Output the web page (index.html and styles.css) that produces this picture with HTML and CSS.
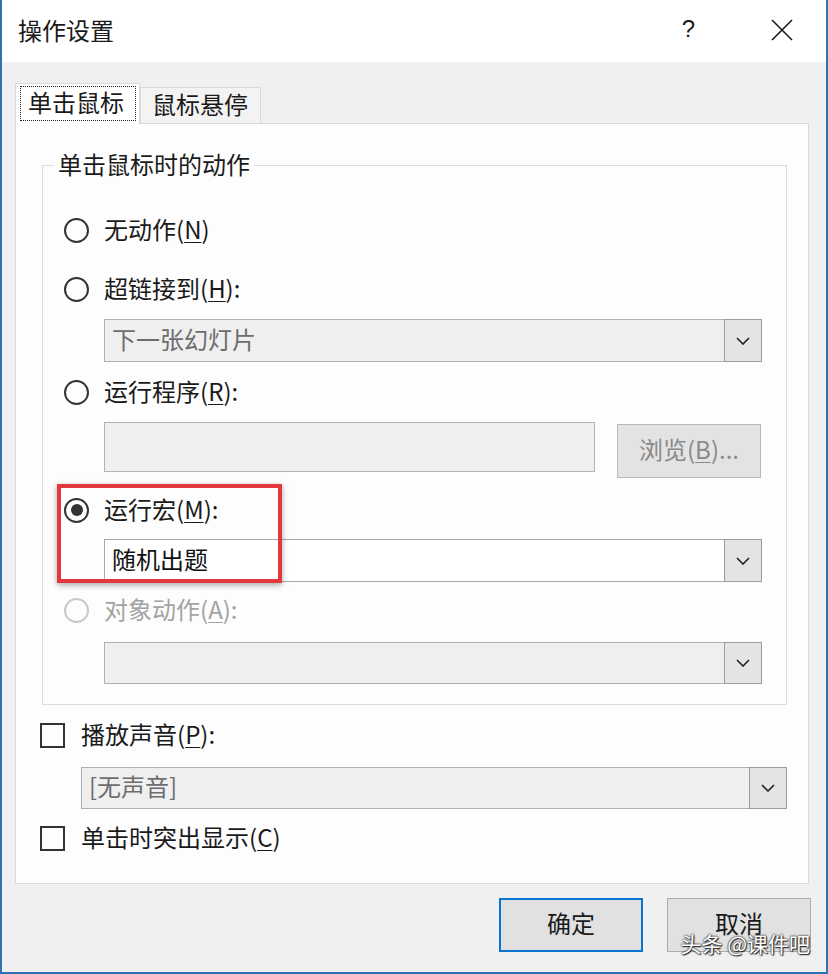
FILE: index.html
```html
<!DOCTYPE html>
<html lang="zh-CN">
<head>
<meta charset="utf-8">
<title>操作设置</title>
<link rel="stylesheet" href="styles.css">
</head>
<body>
<div class="window">
  <div class="titlebar">
    <span class="title">操作设置</span>
    <span class="help">?</span>
    <svg class="close" width="22" height="22" viewBox="0 0 22 22"><path d="M1 1L21 21M21 1L1 21" stroke="#1a1a1a" stroke-width="1.6" fill="none"/></svg>
  </div>

  <div class="tabs">
    <div class="tab active"><span class="focus">单击鼠标</span></div>
    <div class="tab">鼠标悬停</div>
  </div>

  <div class="panel">
    <fieldset class="group">
      <legend>单击鼠标时的动作</legend>

      <div class="row r1"><span class="radio"></span><span class="lbl">无动作(<u>N</u>)</span></div>
      <div class="row r2"><span class="radio"></span><span class="lbl">超链接到(<u>H</u>):</span></div>
      <div class="combo d1 disabled"><span class="val">下一张幻灯片</span><span class="drop"><svg width="14" height="8" viewBox="0 0 14 8"><path d="M1 1L7 7L13 1" stroke="#222" stroke-width="1.6" fill="none"/></svg></span></div>
      <div class="row r3"><span class="radio"></span><span class="lbl">运行程序(<u>R</u>):</span></div>
      <div class="fieldrow">
        <div class="textbox"></div>
        <div class="browse">浏览(<u>B</u>)...</div>
      </div>
      <div class="macro">
        <div class="row r4"><span class="radio checked"></span><span class="lbl">运行宏(<u>M</u>):</span></div>
        <div class="combo d2"><span class="val dark">随机出题</span><span class="drop"><svg width="14" height="8" viewBox="0 0 14 8"><path d="M1 1L7 7L13 1" stroke="#222" stroke-width="1.6" fill="none"/></svg></span></div>
        <div class="highlight"></div>
      </div>
      <div class="row r5"><span class="radio off"></span><span class="lbl grey">对象动作(<u>A</u>):</span></div>
      <div class="combo d3 disabled"><span class="val"></span><span class="drop"><svg width="14" height="8" viewBox="0 0 14 8"><path d="M1 1L7 7L13 1" stroke="#222" stroke-width="1.6" fill="none"/></svg></span></div>
    </fieldset>

    <div class="row c1"><span class="check"></span><span class="lbl">播放声音(<u>P</u>):</span></div>
    <div class="combo d4 disabled"><span class="val">[无声音]</span><span class="drop"><svg width="14" height="8" viewBox="0 0 14 8"><path d="M1 1L7 7L13 1" stroke="#222" stroke-width="1.6" fill="none"/></svg></span></div>
    <div class="row c2"><span class="check"></span><span class="lbl">单击时突出显示(<u>C</u>)</span></div>
  </div>

  <div class="footer">
    <div class="btn primary">确定</div>
    <div class="btn">取消</div>
  </div>

  <div class="watermark">头条 @课件吧</div>
</div>
</body>
</html>
```

FILE: styles.css
```css
* { box-sizing: border-box; }
html, body { margin: 0; padding: 0; }
body {
  font-family: "Noto Sans CJK SC", "Microsoft YaHei", sans-serif;
  font-size: 24px;
  color: #1a1a1a;
  background: #f0f0f0;
}
u { text-decoration-thickness: 1px; text-underline-offset: 3px; }

.window {
  position: relative;
  width: 828px;
  height: 974px;
  background: #f0f0f0;
  border-left: 2px solid #2f73b6;
  border-right: 2px solid #2f73b6;
  border-bottom: 2px solid #2f73b6;
  display: flex;
  flex-direction: column;
}

.titlebar {
  height: 62px;
  background: #ffffff;
  display: flex;
  align-items: center;
  padding-left: 16px;
  flex-shrink: 0;
}
.title { line-height: 1; margin-top: -3px; }
.help { margin-left: auto; font-size: 24px; font-family: "Liberation Sans", sans-serif; color: #1a1a1a; margin-top: -4px; }
.close { margin-left: 76px; margin-right: 33px; margin-top: -3px; }

.tabs {
  display: flex;
  align-items: flex-end;
  margin-top: 20px;
  margin-left: 13px;
  height: 41px;
  position: relative;
  z-index: 1;
}
.tab {
  height: 36px;
  width: 121px;
  border: 1px solid #d9d9d9;
  border-bottom: none;
  background: #f3f3f3;
  padding-left: 11px;
  line-height: 32px;
}
.tab.active {
  height: 41px;
  width: 125px;
  background: #ffffff;
  padding: 2px 3px 0 4px;
  margin-bottom: -1px;
}
.focus {
  display: block;
  height: 35px;
  border: 1px dotted #222;
  padding-left: 7px;
  line-height: 30px;
}

.panel {
  margin: 0 17px 0 13px;
  height: 761px;
  background: #fdfdfd;
  border: 1px solid #d9d9d9;
  padding: 27px 21px 0 0;
  display: flex;
  flex-direction: column;
}

.group {
  margin: 0 0 0 26px;
  padding: 0 0 20px 0;
  border: 1px solid #dcdcdc;
  min-width: 0;
}
.group legend {
  margin-left: 11px;
  padding: 0 4px;
  line-height: 26px;
  height: 28px;
}

.row {
  height: 32px;
  display: flex;
  align-items: center;
}
.lbl { line-height: 1; margin-top: -3px; }
.grey { color: #a3a3a3; }

.radio {
  width: 25px;
  height: 25px;
  border: 2px solid #333;
  border-radius: 50%;
  margin-left: 21px;
  margin-right: 15px;
  position: relative;
  flex-shrink: 0;
}
.radio.checked::after {
  content: "";
  position: absolute;
  left: 4.5px;
  top: 4.5px;
  width: 12px;
  height: 12px;
  border-radius: 50%;
  background: #333;
}
.radio.off { border-color: #c8c8c8; }

.r1 { margin-top: 35px; }
.r2 { margin-top: 27px; }
.d1 { margin-top: 14px; }
.r3 { margin-top: 14px; }
.fieldrow { margin-top: 14px; }
.macro { margin-top: 16px; position: relative; }
.d2 { margin-top: 13px; }
.r5 { margin-top: 12px; }
.d3 { margin-top: 16px; }

.combo {
  height: 43px;
  margin-left: 61px;
  margin-right: 24px;
  border: 1px solid #a8a8a8;
  background: #ffffff;
  display: flex;
  align-items: stretch;
}
.combo.disabled { background: #efefef; border-color: #b0b0b0; }
.d3 { height: 42px; }
.val {
  flex: 1;
  padding: 0 0 4px 7px;
  display: flex;
  align-items: center;
  color: #6d6d6d;
  line-height: 1;
}
.val.dark { color: #111; }
.drop {
  width: 38px;
  margin: -1px -1px -1px 0;
  border: 1px solid #9c9c9c;
  background: #e4e4e4;
  display: flex;
  align-items: center;
  justify-content: center;
}

.fieldrow {
  display: flex;
  align-items: flex-start;
  margin-left: 61px;
  gap: 22px;
}
.textbox {
  width: 491px;
  height: 50px;
  background: #f0f0f0;
  border: 1px solid #b4b4b4;
}
.browse {
  margin-top: 2px;
  width: 144px;
  height: 54px;
  background: #e3e3e3;
  border: 1px solid #b9b9b9;
  color: #8a8a8a;
  display: flex;
  align-items: center;
  justify-content: center;
  line-height: 1;
  padding-bottom: 4px;
}

.highlight {
  position: absolute;
  left: 14px;
  top: -10px;
  width: 225px;
  height: 99px;
  border: 4px solid #e4373c;
  box-shadow: 0 2px 6px rgba(0, 0, 0, 0.35);
  pointer-events: none;
}

.check {
  width: 25px;
  height: 25px;
  border: 2px solid #333;
  margin-left: 24px;
  margin-right: 16px;
  flex-shrink: 0;
}
.c1 { margin-top: 14px; }
.d4 { margin-top: 16px; margin-left: 65px; margin-right: 0; height: 42px; }
.c2 { margin-top: 13px; }

.footer {
  display: flex;
  justify-content: flex-end;
  gap: 24px;
  padding: 14px 15px 0 0;
}
.btn {
  width: 144px;
  height: 54px;
  background: #e1e1e1;
  border: 1px solid #adadad;
  display: flex;
  align-items: center;
  justify-content: center;
  line-height: 1;
  color: #1a1a1a;
  padding-bottom: 4px;
}
.btn.primary { border: 2px solid #0a72d0; }

.watermark {
  position: absolute;
  right: 16px;
  bottom: 18px;
  font-size: 21px;
  color: #ffffff;
  line-height: 1;
  text-shadow: 0 0 2px #333, 0 0 2px #333, 1px 1px 1px #222;
}
```
